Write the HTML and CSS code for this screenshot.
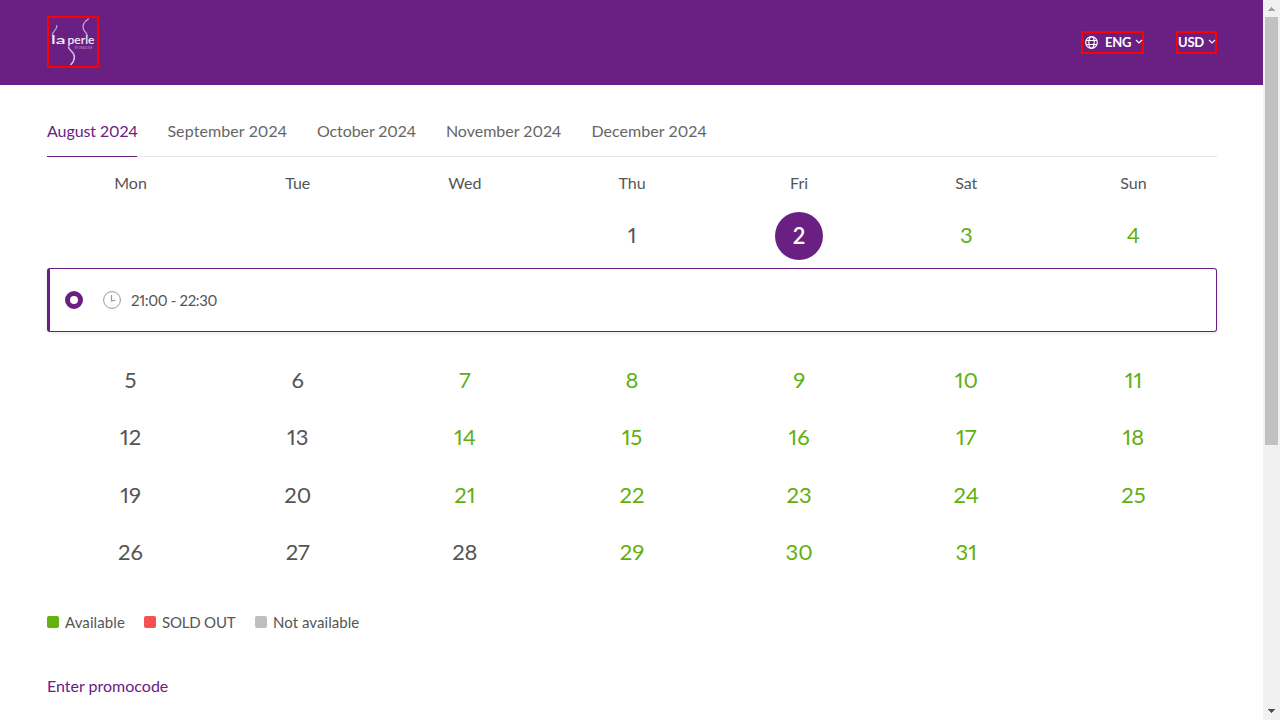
FILE: index.html
```html
<!DOCTYPE html>
<html lang="en">
<head>
<meta charset="utf-8">
<title>La Perle</title>
<link rel="stylesheet" href="styles.css">
</head>
<body>
<div class="window">
<div class="page">
<header class="header">
<a class="logo">
<svg width="48" height="48" viewBox="0 0 48 48" fill="none" stroke-linecap="round" stroke-linejoin="round">
<path d="M7.700 7.500C9 11 3.500 13 3.300 17" stroke="#c4a5d2" stroke-width="1.100"/>
<path d="M39.300 1c-4.500 3-6.500 7-4.500 11 1.300 2.500 3 3 3.200 5" stroke="#cbaed8" stroke-width="1.200"/>
<path d="M19.500 29c0 3 5.800 4.500 5.900 10 0 3-1.500 5.500-3.500 7.500" stroke="#d6bfe2" stroke-width="1.500"/>
<text class="wordmark" x="2" y="26" textLength="14.500" lengthAdjust="spacingAndGlyphs">la</text>
<text class="wordmark" x="18.500" y="26" textLength="27" lengthAdjust="spacingAndGlyphs">perle</text>
<text class="tagline" x="25.500" y="31" textLength="18">BY DRAGONE</text>
</svg>
</a>
<div class="selectors">
<div class="selector lang">
<svg class="globe" width="13" height="13" viewBox="0 0 13 13" fill="none" stroke="#fff" stroke-width="1.200"><circle cx="6.500" cy="6.500" r="5.800"/><ellipse cx="6.500" cy="6.500" rx="2.700" ry="5.800"/><path d="M1.200 4.500h10.600M1.200 8.500h10.600" stroke-width="1"/></svg>
<span class="selector-text">ENG</span>
<svg class="chev" width="8" height="6" viewBox="0 0 8 6" fill="none" stroke="#fff" stroke-width="1.200"><path d="M1 1l3 3 3-3"/></svg>
</div>
<div class="selector cur">
<span class="selector-text">USD</span>
<svg class="chev" width="8" height="6" viewBox="0 0 8 6" fill="none" stroke="#fff" stroke-width="1.200"><path d="M1 1l3 3 3-3"/></svg>
</div>
</div>
</header>
<main class="content">
<nav class="months">
<a class="month aug active">August 2024</a><a class="month sep">September 2024</a><a class="month oct">October 2024</a><a class="month nov">November 2024</a><a class="month dec">December 2024</a>
</nav>
<div class="week names"><span>Mon</span><span>Tue</span><span>Wed</span><span>Thu</span><span>Fri</span><span>Sat</span><span>Sun</span></div>
<div class="week first"><span></span><span></span><span></span><span>1</span><span class="picked"><b class="selected">2</b></span><span class="open">3</span><span class="open">4</span></div>
<div class="slot">
<span class="radio"></span>
<svg class="clock" width="18" height="18" viewBox="0 0 18 18" fill="none" stroke="#999" stroke-width="1"><circle cx="9" cy="9" r="8.400"/><path d="M8.500 4v6l4-1" stroke-width="1.200"/></svg>
<span class="time">21:00 - 22:30</span>
</div>
<div class="weeks">
<div class="week"><span>5</span><span>6</span><span class="open">7</span><span class="open">8</span><span class="open">9</span><span class="open">10</span><span class="open">11</span></div>
<div class="week"><span>12</span><span>13</span><span class="open">14</span><span class="open">15</span><span class="open">16</span><span class="open">17</span><span class="open">18</span></div>
<div class="week"><span>19</span><span>20</span><span class="open">21</span><span class="open">22</span><span class="open">23</span><span class="open">24</span><span class="open">25</span></div>
<div class="week"><span>26</span><span>27</span><span>28</span><span class="open">29</span><span class="open">30</span><span class="open">31</span><span></span></div>
</div>
<div class="legend">
<span class="key available"><i class="swatch green"></i>Available</span>
<span class="key sold"><i class="swatch red"></i>SOLD OUT</span>
<span class="key unavailable"><i class="swatch grey"></i>Not available</span>
</div>
<a class="promo">Enter promocode</a>
</main>
</div>
<div class="scrollbar">
<svg width="17" height="17" viewBox="0 0 17 17" shape-rendering="crispEdges"><path d="M8 7h1v1h1v1h1v1h1v1H5v-1h1V9h1V8h1z" fill="#a3a3a3"/></svg>
<div class="thumb"></div>
<svg class="down" width="17" height="17" viewBox="0 0 17 17" shape-rendering="crispEdges"><path d="M5 6h7v1h-1v1h-1v1H9v1H8V9H7V8H6V7H5z" fill="#505050"/></svg>
</div>
</div>
</body>
</html>
```
FILE: styles.css
```css
* { box-sizing: border-box; }
body {
  margin: 0;
  background: #fff;
  color: #555;
  font: 16px/20px Lato, "Open Sans", sans-serif;
  font-feature-settings: "pnum", "lnum";
}
.window { display: flex; height: 720px; overflow: hidden; }
.page { width: 1263px; }
.header {
  height: 85px;
  padding: 0 46px 0 47px;
  background: #692082;
  display: flex;
  align-items: center;
  justify-content: space-between;
}
.logo { width: 52px; height: 52px; border: 2px solid #f00; margin-top: -1px; }
.logo svg { display: block; }
.wordmark { fill: #f3eaf7; font: 600 12px Lato, sans-serif; }
.tagline { fill: #b18fc1; font: 3px Lato, sans-serif; }
.selectors { display: flex; gap: 32px; }
.selector {
  height: 23px;
  border: 2px solid #f00;
  display: flex;
  align-items: center;
  color: #fff;
  font-size: 13px;
  font-weight: 700;
  letter-spacing: -.25px;
}
.selector-text { padding-bottom: 1px; }
.lang { width: 63px; padding-left: 2px; }
.lang .selector-text { margin-left: 7px; }
.globe { margin-bottom: 1px; }
.cur { width: 41px; }
.chev { margin: 0 -1px 2px auto; }
.content { width: 1170px; margin-left: 47px; }
.months {
  height: 72px;
  display: flex;
  gap: 30px;
  border-bottom: 1px solid #e6e6e6;
}
.month { height: 72px; padding-top: 36px; white-space: nowrap; color: #666; }
.month.active { color: #692082; border-bottom: 1px solid #692082; }
.aug { width: 90.400px; letter-spacing: -.08px; }
.sep { width: 119.500px; letter-spacing: .1px; }
.oct { width: 99px; letter-spacing: -.08px; }
.nov { width: 115.500px; }
.dec { letter-spacing: .06px; }
.week {
  display: grid;
  grid-template-columns: repeat(7, 1fr);
  height: 57.500px;
  padding-bottom: 2px;
  align-items: center;
  justify-items: center;
  font-size: 22px;
  line-height: 28px;
}
.names { height: 55px; padding-bottom: 3px; font-size: 16px; line-height: 20px; }
.first { height: 48px; }
.first > span { margin-top: -2px; }
.first > .picked { height: 48px; margin-top: 0; align-self: start; }
.open { color: #5fb010; }
.selected {
  display: block;
  width: 48px;
  height: 48px;
  border-radius: 50%;
  background: #692082;
  color: #fff;
  font-weight: 600;
  line-height: 47px;
  text-align: center;
}
.slot {
  height: 64px;
  margin-top: 8px;
  padding-left: 15px;
  border: 1px solid #692082;
  border-left-width: 3px;
  border-radius: 3px;
  box-shadow: 0 1px 4px rgba(0, 0, 0, .1);
  display: flex;
  align-items: center;
}
.radio { width: 18px; height: 18px; border: 5px solid #692082; border-radius: 50%; }
.clock { margin-left: 20px; }
.time { margin-left: 10px; font-size: 15px; letter-spacing: -.33px; }
.weeks { margin-top: 20px; }
.legend { display: flex; margin-top: 30px; font-size: 15px; }
.key { display: flex; align-items: center; white-space: nowrap; }
.available { width: 97px; letter-spacing: .1px; }
.sold { width: 111px; letter-spacing: -.2px; }
.unavailable { letter-spacing: .05px; }
.swatch { width: 12px; height: 12px; margin-right: 6px; border-radius: 2px; }
.green { background: #65b112; }
.red { background: #f45151; }
.grey { background: #bfbfbf; }
.promo { display: inline-block; margin-top: 44px; color: #692082; }
.scrollbar { width: 17px; background: #f1f1f1; display: flex; flex-direction: column; }
.scrollbar svg { display: block; }
.thumb { width: 13px; height: 428px; margin-left: 2px; background: #c1c1c1; }
.down { margin-top: auto; }
```
